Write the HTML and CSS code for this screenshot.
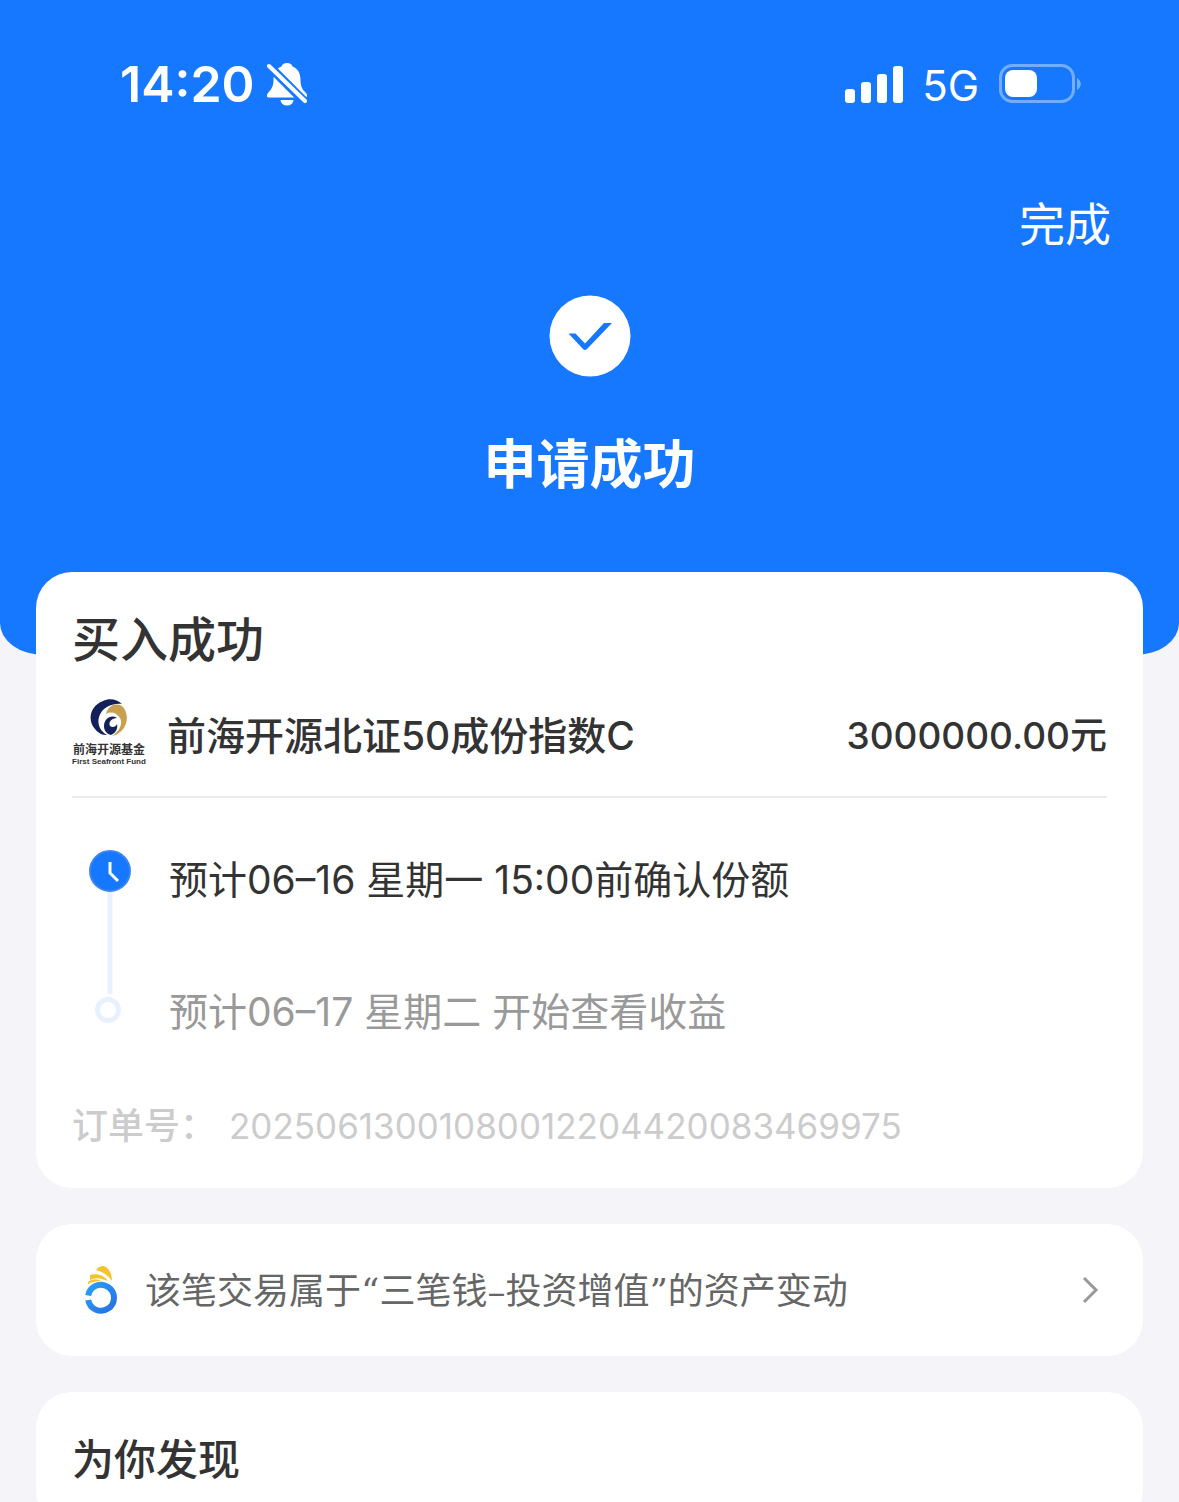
FILE: index.html
```html
<!DOCTYPE html>
<html lang="zh-CN">
<head>
<meta charset="utf-8">
<meta name="viewport" content="width=device-width, initial-scale=1">
<title>申请成功</title>
<link rel="stylesheet" href="styles.css">
</head>
<body>
<header class="hero">
  <div class="status">
    <div class="status-group">
      <span class="time">14:20</span>
      <svg class="bell" width="42" height="44" viewBox="0 0 42 44" aria-hidden="true">
        <path fill="#fff" d="M20 1c-3 0-5 1.500-5.500 3.500C8 7 6.500 13 6.500 18c0 6-2 9-5.500 13-2 3-1 4.500 1 4.500h36c2 0 3-2 1-4.500-4-4-5.500-7-5.500-13 0-5-1.500-11-8-13.500C25 2.500 23 1 20 1zM13.500 38a6.500 5.500 0 0 0 13 0z"/>
        <path stroke="#1677ff" stroke-width="9" d="M-1 1L42 44"/>
        <path stroke="#fff" stroke-width="4" stroke-linecap="round" d="M2 4l36 35"/>
      </svg>
    </div>
    <div class="status-group">
      <svg width="60" height="38" viewBox="0 0 60 38" fill="#fff" aria-hidden="true">
        <rect x="1" y="24" width="10" height="14" rx="3"/><rect x="17" y="17" width="10" height="21" rx="3"/><rect x="33" y="9" width="10" height="29" rx="3"/><rect x="49" y="1" width="10" height="37" rx="3"/>
      </svg>
      <span class="network">5G</span>
      <svg class="battery" width="84" height="40" viewBox="0 0 84 40" aria-hidden="true">
        <rect x="1.500" y="1.500" width="73" height="36" rx="12" fill="none" stroke="#73adff" stroke-width="3"/>
        <rect x="6" y="6" width="32" height="27" rx="8" fill="#fff"/>
        <path fill="#73adff" d="M78 14c5 3 5 9 0 12z"/>
      </svg>
    </div>
  </div>
  <nav class="nav"><button class="done" type="button">完成</button></nav>
  <svg class="check" width="82" height="82" viewBox="0 0 82 82" aria-hidden="true">
    <circle cx="41" cy="41" r="40.500" fill="#fff"/>
    <path fill="#1677ff" d="M19.500 38.500h7L36 48.500 55 28h8L38 54q-2 2-4 0z"/>
  </svg>
  <h1 class="result">申请成功</h1>
</header>
<main class="content">
  <section class="card order">
    <h2 class="order-title">买入成功</h2>
    <div class="fund">
      <div class="fund-logo">
        <svg width="40" height="40" viewBox="0 0 40 40" aria-hidden="true">
          <path fill="#14205a" d="M33 6C28 1 20 0 14 3 1 8-2 22 6 31c4 5 8 6 12 6C11 33 8 26 10 19 13 10 22 5 33 6z"/>
          <path fill="#c8a050" d="M17 16C19 7 28 4 34 9c7 8 5 25-11 29 8-5 11-13 8-18-3-5-9-7-14-4z"/>
          <path fill="#14205a" d="M28 20c-6-4-13 1-13 8 0 5 3 8 7 9 5-2 7-7 6-11-1 3-5 4-7 2-2-4 2-8 7-8z"/>
        </svg>
        <span class="logo-cn">前海开源基金</span>
        <span class="logo-en">First Seafront Fund</span>
      </div>
      <span class="fund-name">前海开源北证50成份指数C</span>
      <span class="fund-amount">3000000.00元</span>
    </div>
    <div class="timeline">
      <svg width="42" height="176" viewBox="0 0 42 176" aria-hidden="true">
        <path stroke="#e8f2ff" stroke-width="5" d="M21 40v104"/>
        <circle cx="21" cy="21" r="20" fill="#1677ff" stroke="#3985f5" stroke-width="2"/>
        <path fill="none" stroke="#fff" stroke-width="3" d="M21 12v11l8 8"/>
        <circle cx="19" cy="160" r="10.500" fill="#fff" stroke="#e8f0ff" stroke-width="5"/>
      </svg>
      <ol class="steps">
        <li class="step">预计06–16 星期一 15:00前确认份额</li>
        <li class="step step-next">预计06–17 星期二 开始查看收益</li>
      </ol>
    </div>
    <dl class="order-no"><dt>订单号：</dt><dd>20250613001080012204420083469975</dd></dl>
  </section>
  <a class="card notice" href="#">
    <svg width="34" height="50" viewBox="0 0 34 50" aria-hidden="true">
      <defs><linearGradient id="ring" x1="0" y1="0" x2="1" y2="1"><stop offset="0" stop-color="#28a0f5"/><stop offset="1" stop-color="#286fe6"/></linearGradient></defs>
      <path fill="none" stroke="url(#ring)" stroke-width="6" d="M4.200 30.500A13 13 0 1 1 4.200 35"/>
      <path fill="#f5c32c" d="M12 5C15 1 19 0 22 2c4 3 6 8 6 14C24 10 19 7 12 5zM6 10c7-2 14 0 18 6-7-3-12-4-18-1zM4 17c4-3 9-3 13-1-5 0-9 1-13 3z"/>
    </svg>
    <span class="notice-text">该笔交易属于“三笔钱–投资增值”的资产变动</span>
    <svg width="20" height="28" viewBox="0 0 20 28" aria-hidden="true"><path fill="none" stroke="#999" stroke-width="3" d="M3 2l12 12L3 26"/></svg>
  </a>
  <section class="card discover">
    <h2 class="discover-title">为你发现</h2>
  </section>
</main>
</body>
</html>
```

FILE: styles.css
```css
* { box-sizing: border-box; }
body {
  margin: 0;
  background: #f4f4f9;
  color: #333;
  font-family: Inter, "Noto Sans CJK SC", sans-serif;
}
h1, h2, ol, dl, dd { margin: 0; padding: 0; }
.hero {
  display: flex;
  flex-direction: column;
  align-items: center;
  padding: 54px 68px 158px;
  border-radius: 0 0 44px 44px / 0 0 32px 32px;
  background: #1677ff;
  color: #fff;
}
.status {
  display: flex;
  justify-content: space-between;
  align-self: stretch;
  height: 60px;
  padding: 0 28px 0 52px;
}
.status-group { display: flex; align-items: center; }
.time { font-size: 50px; font-weight: 600; line-height: 60px; }
.bell { margin-left: 12px; }
.network { margin: 4px 20px 0 18px; font-size: 42px; font-weight: 400; line-height: 56px; }
.nav { align-self: flex-end; margin-top: 80px; }
.done {
  display: block;
  padding: 0;
  border: 0;
  background: none;
  color: inherit;
  font: inherit;
  font-size: 46px;
  line-height: 60px;
}
.check { margin-top: 41px; }
.result { margin-top: 56px; font-size: 53px; font-weight: 700; line-height: 64px; }
.content {
  display: flex;
  flex-direction: column;
  gap: 36px;
  margin-top: -83px;
  padding: 0 36px;
}
.card { padding: 36px; border-radius: 36px; background: #fff; }
.order { padding-top: 38px; padding-bottom: 38px; }
.order-title { font-size: 48px; font-weight: 500; line-height: 60px; }
.fund {
  display: flex;
  align-items: center;
  margin-top: 28px;
  padding-bottom: 30px;
  border-bottom: 2px solid #ebebeb;
}
.fund-logo {
  display: flex;
  flex-direction: column;
  align-items: center;
  width: 74px;
  margin-right: 21px;
  font-weight: 600;
  white-space: nowrap;
}
.logo-cn { padding-top: 4px; font-size: 12px; line-height: 16px; }
.logo-en { font-family: "Liberation Sans", sans-serif; font-size: 8px; line-height: 8px; }
.fund-name,
.fund-amount { padding-top: 8px; font-weight: 500; line-height: 60px; }
.fund-name { flex: 1; font-size: 39px; }
.fund-amount { font-size: 37px; }
.timeline { display: flex; gap: 38px; margin-top: 52px; padding-left: 17px; }
.steps {
  display: flex;
  flex-direction: column;
  gap: 72px;
  list-style: none;
  font-size: 39px;
  line-height: 60px;
}
.step-next { color: #999; }
.order-no {
  display: flex;
  gap: 13px;
  margin-top: 60px;
  color: #ccc;
  font-size: 36px;
  line-height: 48px;
}
.order-no dt { font-weight: 500; }
.order-no dd { font-size: 35px; }
.notice {
  display: flex;
  align-items: center;
  padding: 34px 42px 34px 48px;
  color: #666;
  text-decoration: none;
}
.notice-text {
  flex: 1;
  margin-left: 27px;
  padding-top: 4px;
  font-family: "DejaVu Serif", "Noto Sans CJK SC", sans-serif;
  font-size: 36px;
  line-height: 60px;
}
.discover-title { padding-top: 2px; font-size: 42px; font-weight: 500; line-height: 60px; }
```
